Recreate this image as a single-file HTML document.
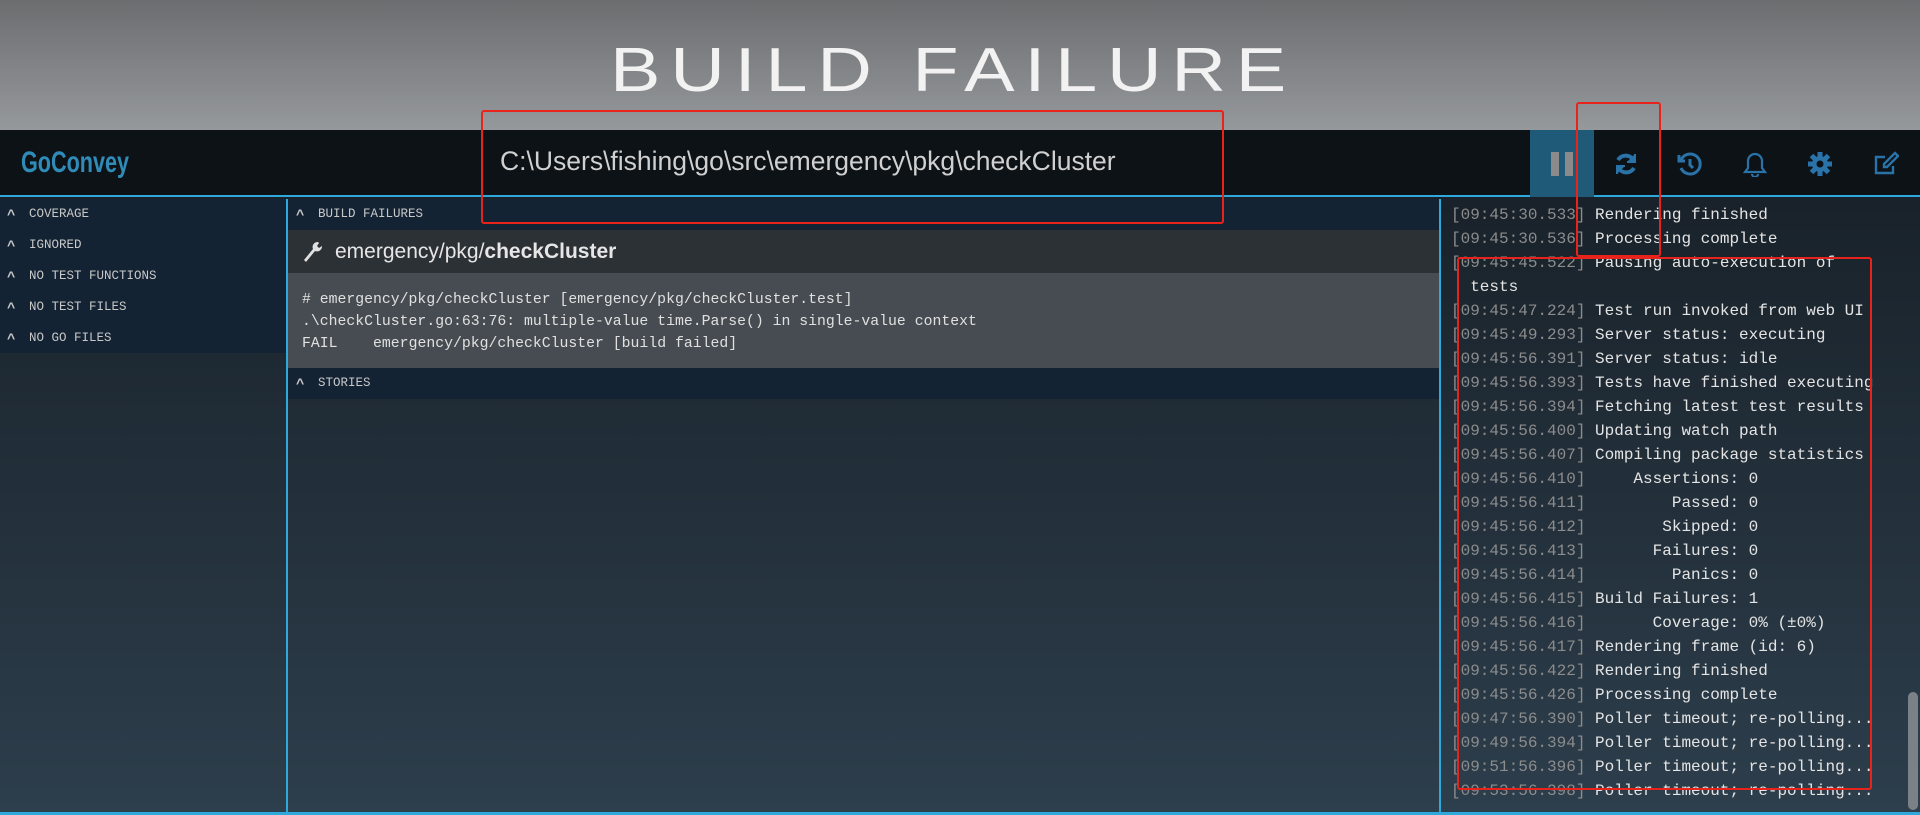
<!DOCTYPE html>
<html><head><meta charset="utf-8"><style>
*{margin:0;padding:0;box-sizing:border-box}
body{width:1920px;height:815px;overflow:hidden;position:relative;background:linear-gradient(#19222a 200px,#2d3e4c 815px);font-family:"Liberation Sans",sans-serif}
.top{position:absolute;left:0;top:0;width:1920px;height:130px;background:linear-gradient(#6b6d6f,#96999c)}
.title{position:absolute;left:610px;top:40px;font-size:62px;letter-spacing:8px;color:#f2f2f2;transform:scaleX(1.22);transform-origin:left;font-weight:normal;line-height:62px}
.nav{position:absolute;left:0;top:130px;width:1920px;height:67px;background:#0d1216;border-bottom:2px solid #2fa9dc}
.logo{position:absolute;left:21px;top:16px;font-size:30px;color:#2f8cb9;font-weight:bold;transform:scaleX(.72);transform-origin:left;font-family:"Liberation Sans Narrow","Liberation Sans",sans-serif}
.path{position:absolute;left:500px;top:16px;font-size:26.5px;color:#d0d0d0}
.pause{position:absolute;left:1530px;top:0;width:64px;height:67px;background:#1f5a78}
.pause i{position:absolute;top:22px;width:8px;height:24px;background:#8a8a8a}
.ico{position:absolute;top:21px;width:26px;height:26px}
.left{position:absolute;left:0;top:199px;width:286px;height:154px;background:#142334}
.row{height:31px;line-height:31px;font-family:"Liberation Mono",monospace;font-size:12.5px;color:#c8c8c8;padding-left:29px;position:relative}
.row:before{content:"^";position:absolute;left:7px;top:2px;font-weight:bold;font-size:14px}
.mid{position:absolute;left:286px;top:199px;width:1153px;height:613px;border-left:2px solid #2fa9dc}
.hdr{height:31px;line-height:31px;background:#142334;font-family:"Liberation Mono",monospace;font-size:12.5px;color:#c8c8c8;padding-left:30px;position:relative}
.hdr:before{content:"^";position:absolute;left:8px;top:2px;font-weight:bold;font-size:14px}
.pkg{height:43px;background:#2b3135;color:#e6e6e6;font-size:21px;line-height:43px;padding-left:47px;position:relative}
.code{height:95px;background:#464c51;color:#e0e0e0;font-family:"Liberation Mono",monospace;font-size:14.8px;line-height:22px;padding:16px 14px;white-space:pre}
.right{position:absolute;left:1439px;top:199px;width:481px;height:613px;border-left:2px solid #2fa9dc;padding:4px 0 0 10px;font-family:"Liberation Mono",monospace;font-size:16px;line-height:24px;color:#e4e4e4;white-space:pre;overflow:hidden}
.right span{color:#8c8c8c}
.bot{position:absolute;left:0;top:812px;width:1920px;height:3px;background:#2fa9dc}
.red{position:absolute;border:2px solid #e8231c;border-radius:3px}
.sb{position:absolute;left:1908px;top:692px;width:10px;height:118px;border-radius:5px;background:#7a8288}
</style></head><body>
<div class="top"><div class="title">BUILD FAILURE</div></div>
<div class="nav">
<div class="logo">GoConvey</div>
<div class="path">C:\Users\fishing\go\src\emergency\pkg\checkCluster</div>
<div class="pause"><i style="left:21px"></i><i style="left:35px"></i></div>
<svg class="ico" style="left:1613px" viewBox="0 0 26 26" fill="none" stroke="#2a73a8" stroke-width="4"><path d="M21 10A9 9 0 0 0 5 9"/><path d="M5 16a9 9 0 0 0 16 1"/><path d="M22 3v8h-8" fill="#2a73a8" stroke-width="2"/><path d="M4 23v-8h8" fill="#2a73a8" stroke-width="2"/></svg>
<svg class="ico" style="left:1676px" viewBox="0 0 26 26" fill="none" stroke="#2a73a8" stroke-width="3"><path d="M5 9a10 10 0 1 1 0 8"/><path d="M3 4v6h6"/><path d="M14 8v6l3 3"/></svg>
<svg class="ico" style="left:1742px" viewBox="0 0 26 26" fill="none" stroke="#2a73a8" stroke-width="2.2"><path d="M13 3a7 7 0 0 0-7 7v7l-3 4h20l-3-4v-7a7 7 0 0 0-7-7z"/><path d="M10 23a3 3 0 0 0 6 0"/></svg>
<svg class="ico" style="left:1807px" viewBox="0 0 26 26"><circle cx="13" cy="13" r="8" fill="#2a73a8"/><g stroke="#2a73a8" stroke-width="5"><path d="M13 1v24M1 13h24M4.5 4.5l17 17M21.5 4.5l-17 17"/></g><circle cx="13" cy="13" r="3.5" fill="#0d1216"/></svg>
<svg class="ico" style="left:1873px" viewBox="0 0 26 26" fill="none" stroke="#2a73a8" stroke-width="2.4"><path d="M20 15v7H3V6h9"/><path d="M22 2l3 3-11 11h-3v-3z"/></svg>
</div>
<div class="left">
<div class="row">COVERAGE</div><div class="row">IGNORED</div><div class="row">NO TEST FUNCTIONS</div><div class="row">NO TEST FILES</div><div class="row">NO GO FILES</div>
</div>
<div class="mid">
<div class="hdr">BUILD FAILURES</div>
<div class="pkg"><svg style="position:absolute;left:14px;top:11px" width="20" height="22" viewBox="0 0 20 22"><path d="M16 1a5 5 0 0 0-5 7L2 19l2 2 9-11a5 5 0 0 0 7-5l-3 2-2-2 2-3z" fill="#e0e0e0"/></svg>emergency/pkg/<b>checkCluster</b></div>
<div class="code"># emergency/pkg/checkCluster [emergency/pkg/checkCluster.test]
.\checkCluster.go:63:76: multiple-value time.Parse() in single-value context
FAIL	emergency/pkg/checkCluster [build failed]</div>
<div class="hdr">STORIES</div>
</div>
<div class="right"><span>[09:45:30.533]</span> Rendering finished
<span>[09:45:30.536]</span> Processing complete
<span>[09:45:45.522]</span> Pausing auto-execution of
  tests
<span>[09:45:47.224]</span> Test run invoked from web UI
<span>[09:45:49.293]</span> Server status: executing
<span>[09:45:56.391]</span> Server status: idle
<span>[09:45:56.393]</span> Tests have finished executing
<span>[09:45:56.394]</span> Fetching latest test results
<span>[09:45:56.400]</span> Updating watch path
<span>[09:45:56.407]</span> Compiling package statistics
<span>[09:45:56.410]</span>     Assertions: 0
<span>[09:45:56.411]</span>         Passed: 0
<span>[09:45:56.412]</span>        Skipped: 0
<span>[09:45:56.413]</span>       Failures: 0
<span>[09:45:56.414]</span>         Panics: 0
<span>[09:45:56.415]</span> Build Failures: 1
<span>[09:45:56.416]</span>       Coverage: 0% (±0%)
<span>[09:45:56.417]</span> Rendering frame (id: 6)
<span>[09:45:56.422]</span> Rendering finished
<span>[09:45:56.426]</span> Processing complete
<span>[09:47:56.390]</span> Poller timeout; re-polling...
<span>[09:49:56.394]</span> Poller timeout; re-polling...
<span>[09:51:56.396]</span> Poller timeout; re-polling...
<span>[09:53:56.398]</span> Poller timeout; re-polling...</div>
<div class="sb"></div>
<div class="bot"></div>
<div class="red" style="left:481px;top:110px;width:743px;height:114px"></div>
<div class="red" style="left:1576px;top:102px;width:85px;height:155px"></div>
<div class="red" style="left:1457px;top:257px;width:415px;height:533px"></div>
</body></html>
